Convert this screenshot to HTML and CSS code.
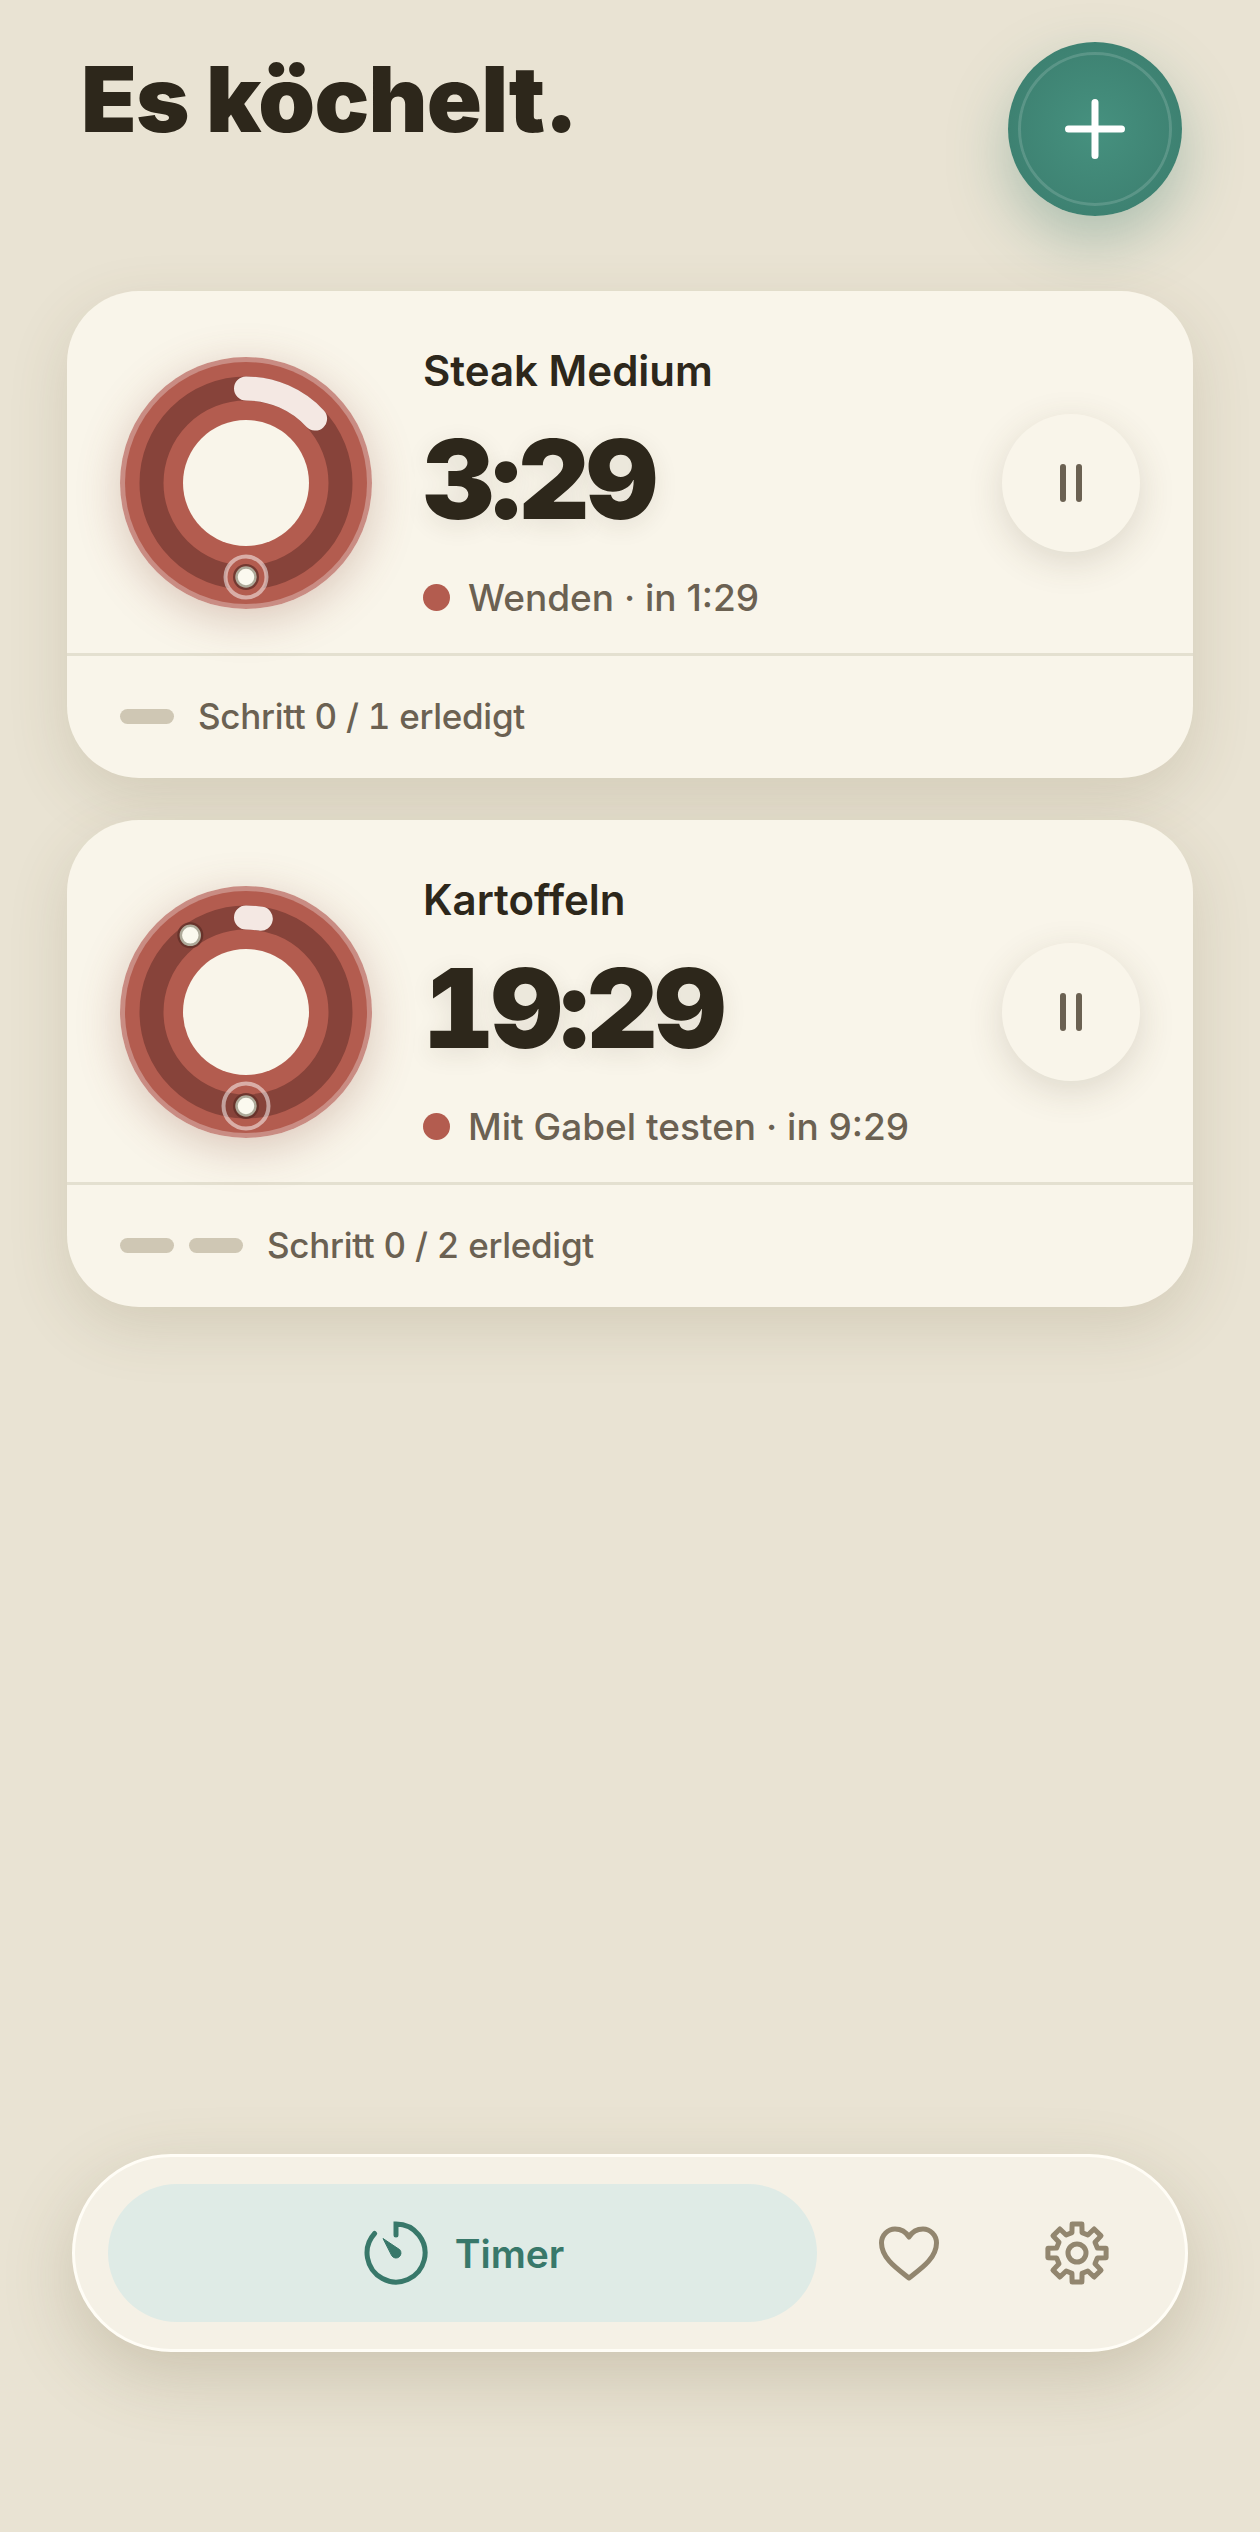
FILE: index.html
```html
<!DOCTYPE html>
<html lang="de">
<head>
    <meta charset="UTF-8">
    <meta name="viewport" content="width=device-width, initial-scale=1.0">
    <title>Es köchelt.</title>
    <link rel="stylesheet" href="styles.css">
</head>
<body>
    <div class="screen">
        <header class="top">
            <h1>Es köchelt.</h1>
            <button class="fab">
                <svg class="fab-icon" viewBox="0 0 174 174">
                    <circle class="fab-rim" cx="87" cy="87" r="75.5"/>
                    <path class="fab-plus" d="M87 60.5v53M60.5 87h53"/>
                </svg>
            </button>
        </header>

        <section class="card">
            <div class="card-main">
                <div class="ring">
                    <svg viewBox="0 0 252 252">
                        <circle class="ring-rim" cx="126" cy="126" r="126"/>
                        <circle class="ring-base" cx="126" cy="126" r="121"/>
                        <circle class="ring-track" cx="126" cy="126" r="94.5"/>
                        <circle class="ring-hole" cx="126" cy="126" r="63"/>
                        <path class="ring-arc" d="M126 31.5A94.5 94.5 0 0 1 195.1 61.6"/>
                        <circle class="pulse pulse-filled" cx="126" cy="220" r="20.5"/>
                        <circle class="dot-halo" cx="126" cy="220" r="13"/>
                        <circle class="dot" cx="126" cy="220" r="9.5"/>
                    </svg>
                </div>
                <div class="info">
                    <div class="name">Steak Medium</div>
                    <div class="time">3:29</div>
                    <div class="status"><span class="status-dot"></span>Wenden · in 1:29</div>
                </div>
                <button class="pause"><span></span><span></span></button>
            </div>
            <div class="card-foot">
                <span class="step"></span>
                <span class="step-label">Schritt 0 / 1 erledigt</span>
            </div>
        </section>

        <section class="card">
            <div class="card-main">
                <div class="ring">
                    <svg viewBox="0 0 252 252">
                        <circle class="ring-rim" cx="126" cy="126" r="126"/>
                        <circle class="ring-base" cx="126" cy="126" r="121"/>
                        <circle class="ring-track" cx="126" cy="126" r="94.5"/>
                        <circle class="ring-hole" cx="126" cy="126" r="63"/>
                        <path class="ring-arc" d="M126 31.5A94.5 94.5 0 0 1 140.8 32.7"/>
                        <circle class="dot-halo" cx="70.3" cy="49.3" r="13"/>
                        <circle class="dot" cx="70.3" cy="49.3" r="9.5"/>
                        <circle class="pulse" cx="126" cy="220" r="22.5"/>
                        <circle class="dot-halo" cx="126" cy="220" r="13"/>
                        <circle class="dot" cx="126" cy="220" r="9.5"/>
                    </svg>
                </div>
                <div class="info">
                    <div class="name">Kartoffeln</div>
                    <div class="time">19:29</div>
                    <div class="status"><span class="status-dot"></span>Mit Gabel testen · in 9:29</div>
                </div>
                <button class="pause"><span></span><span></span></button>
            </div>
            <div class="card-foot">
                <span class="step"></span>
                <span class="step"></span>
                <span class="step-label">Schritt 0 / 2 erledigt</span>
            </div>
        </section>

        <nav class="nav">
            <a class="nav-active">
                <svg class="nav-timer" viewBox="-32 -32 64 64">
                    <path class="timer-line" d="M-21.4 -19.5A29 29 0 1 0 0 -29V-18"/>
                    <path class="timer-hand" d="M-13 -14.5L3.6 -3.4A5 5 0 1 1 -4.2 2.8Z"/>
                </svg>
                Timer
            </a>
            <a class="nav-item">
                <svg class="nav-icon" viewBox="-33 -33 66 66">
                    <path d="M0 25C-10 17 -27.5 6 -27.5 -10C-27.5 -18 -21 -24 -14 -24C-8 -24 -3 -21 0 -16C3 -21 8 -24 14 -24C21 -24 27.5 -18 27.5 -10C27.5 6 10 17 0 25Z"/>
                </svg>
            </a>
            <a class="nav-item">
                <svg class="nav-icon" viewBox="-33 -33 66 66">
                    <path d="M-5.08 -20.38L-4.87 -29.1L4.87 -29.1L5.08 -20.38L10.82 -18L17.13 -24.02L24.02 -17.13L18 -10.82L20.38 -5.08L29.1 -4.87L29.1 4.87L20.38 5.08L18 10.82L24.02 17.13L17.13 24.02L10.82 18L5.08 20.38L4.87 29.1L-4.87 29.1L-5.08 20.38L-10.82 18L-17.13 24.02L-24.02 17.13L-18 10.82L-20.38 5.08L-29.1 4.87L-29.1 -4.87L-20.38 -5.08L-18 -10.82L-24.02 -17.13L-17.13 -24.02L-10.82 -18Z"/>
                    <circle cx="0" cy="0" r="9"/>
                </svg>
            </a>
        </nav>
    </div>
</body>
</html>
```

FILE: styles.css
```css
* {
    box-sizing: border-box;
}
body {
    margin: 0;
    background-color: #e9e3d3;
    font-family: 'Inter', 'Noto Sans', sans-serif;
    color: #2d271b;
}
button {
    padding: 0;
    border: none;
    font: inherit;
}
.screen {
    height: 2532px;
    padding: 0 67px;
    display: flex;
    flex-direction: column;
    overflow: hidden;
}

/* header */
.top {
    height: 216px;
    margin-bottom: 75px;
    padding: 42px 11px 0 14px;
    display: flex;
    justify-content: space-between;
    align-items: flex-start;
}
h1 {
    margin: 0;
    padding-top: 7px;
    font-size: 91px;
    line-height: 100px;
    font-weight: 900;
    letter-spacing: -0.8px;
}
.fab {
    width: 174px;
    height: 174px;
    border-radius: 50%;
    background: radial-gradient(circle, #46917f 0%, #3a7b6c 100%);
    box-shadow: 0 24px 60px rgba(58, 123, 108, 0.35);
}
.fab-icon {
    display: block;
    width: 174px;
    height: 174px;
}
.fab-rim {
    fill: none;
    stroke: rgba(255, 255, 255, 0.15);
    stroke-width: 3;
}
.fab-plus {
    fill: none;
    stroke: #fff;
    stroke-width: 7;
    stroke-linecap: round;
}

/* timer card */
.card {
    height: 487px;
    margin-bottom: 42px;
    background-color: #f9f5ea;
    border-radius: 72px;
    box-shadow: 0 20px 60px rgba(100, 85, 50, 0.16);
}
.card-main {
    height: 365px;
    padding: 66px 53px 44px;
    display: flex;
    align-items: center;
    border-bottom: 3px solid #e4e0d0;
}
.ring {
    width: 252px;
    height: 252px;
    border-radius: 50%;
    box-shadow: 0 10px 44px rgba(140, 80, 60, 0.28);
    margin-right: 51px;
    flex-shrink: 0;
}
.ring svg {
    display: block;
}
.ring-rim {
    fill: #c98c83;
}
.ring-base {
    fill: #b35c4f;
}
.ring-track {
    fill: none;
    stroke: #87433a;
    stroke-width: 24;
}
.ring-hole {
    fill: #f9f5ea;
}
.ring-arc {
    fill: none;
    stroke: #f4e8e3;
    stroke-width: 24;
    stroke-linecap: round;
}
.pulse {
    fill: none;
    stroke: rgba(255, 255, 255, 0.5);
    stroke-width: 4;
}
.pulse-filled {
    fill: #b35c4f;
}
.dot-halo {
    fill: #5d2e27;
    fill-opacity: 0.75;
}
.dot {
    fill: #fbf9ef;
    stroke: #aeaa9a;
    stroke-width: 2.5;
}
.info {
    flex: 1;
    height: 275px;
    display: flex;
    flex-direction: column;
}
.name {
    height: 50px;
    font-size: 42px;
    line-height: 50px;
    font-weight: 600;
}
.time {
    height: 150px;
    margin: 8px 0 21px;
    font-size: 110px;
    line-height: 150px;
    font-weight: 900;
    font-feature-settings: "tnum";
    letter-spacing: -2.6px;
    text-shadow: 0 6px 24px rgba(60, 50, 30, 0.1);
}
.status {
    display: flex;
    align-items: center;
    gap: 18px;
    font-size: 37px;
    line-height: 46px;
    font-weight: 500;
    color: #6b6152;
}
.status-dot {
    width: 27px;
    height: 27px;
    border-radius: 50%;
    background-color: #b35c4f;
}
.pause {
    width: 138px;
    height: 138px;
    border-radius: 50%;
    background-color: #f9f5ea;
    box-shadow: 0 10px 36px rgba(80, 70, 45, 0.16);
    display: flex;
    justify-content: center;
    align-items: center;
    gap: 10px;
    flex-shrink: 0;
}
.pause span {
    width: 6px;
    height: 38px;
    border-radius: 3px;
    background-color: #6b6152;
}
.card-foot {
    height: 120px;
    padding: 0 53px;
    display: flex;
    align-items: center;
    gap: 15px;
}
.step {
    width: 54px;
    height: 15px;
    border-radius: 8px;
    background-color: #cfc7b4;
}
.step-label {
    margin-left: 9px;
    font-size: 35px;
    font-weight: 500;
    font-feature-settings: "tnum";
    letter-spacing: -0.3px;
    color: #6b6152;
}

/* bottom nav */
.nav {
    height: 198px;
    margin: auto 5px 180px;
    padding: 27px 32px 27px 33px;
    display: flex;
    gap: 16px;
    background-color: #f5f1e6;
    border: 3px solid #fffdf6;
    border-radius: 99px;
    box-shadow: 0 24px 70px rgba(100, 85, 50, 0.22);
}
.nav-active {
    flex: 1;
    padding-left: 3px;
    border-radius: 69px;
    background-color: #dfebe6;
    display: flex;
    justify-content: center;
    align-items: center;
    gap: 27px;
    font-size: 39px;
    font-weight: 600;
    color: #38786a;
}
.nav-timer {
    width: 64px;
    height: 64px;
}
.timer-line {
    fill: none;
    stroke: #38786a;
    stroke-width: 5;
    stroke-linecap: round;
}
.timer-hand {
    fill: #38786a;
    stroke: #38786a;
    stroke-width: 1;
    stroke-linejoin: round;
}
.nav-item {
    width: 152px;
    display: flex;
    justify-content: center;
    align-items: center;
}
.nav-icon {
    width: 66px;
    height: 66px;
    fill: none;
    stroke: #92866f;
    stroke-width: 5;
    stroke-linejoin: round;
}
```
